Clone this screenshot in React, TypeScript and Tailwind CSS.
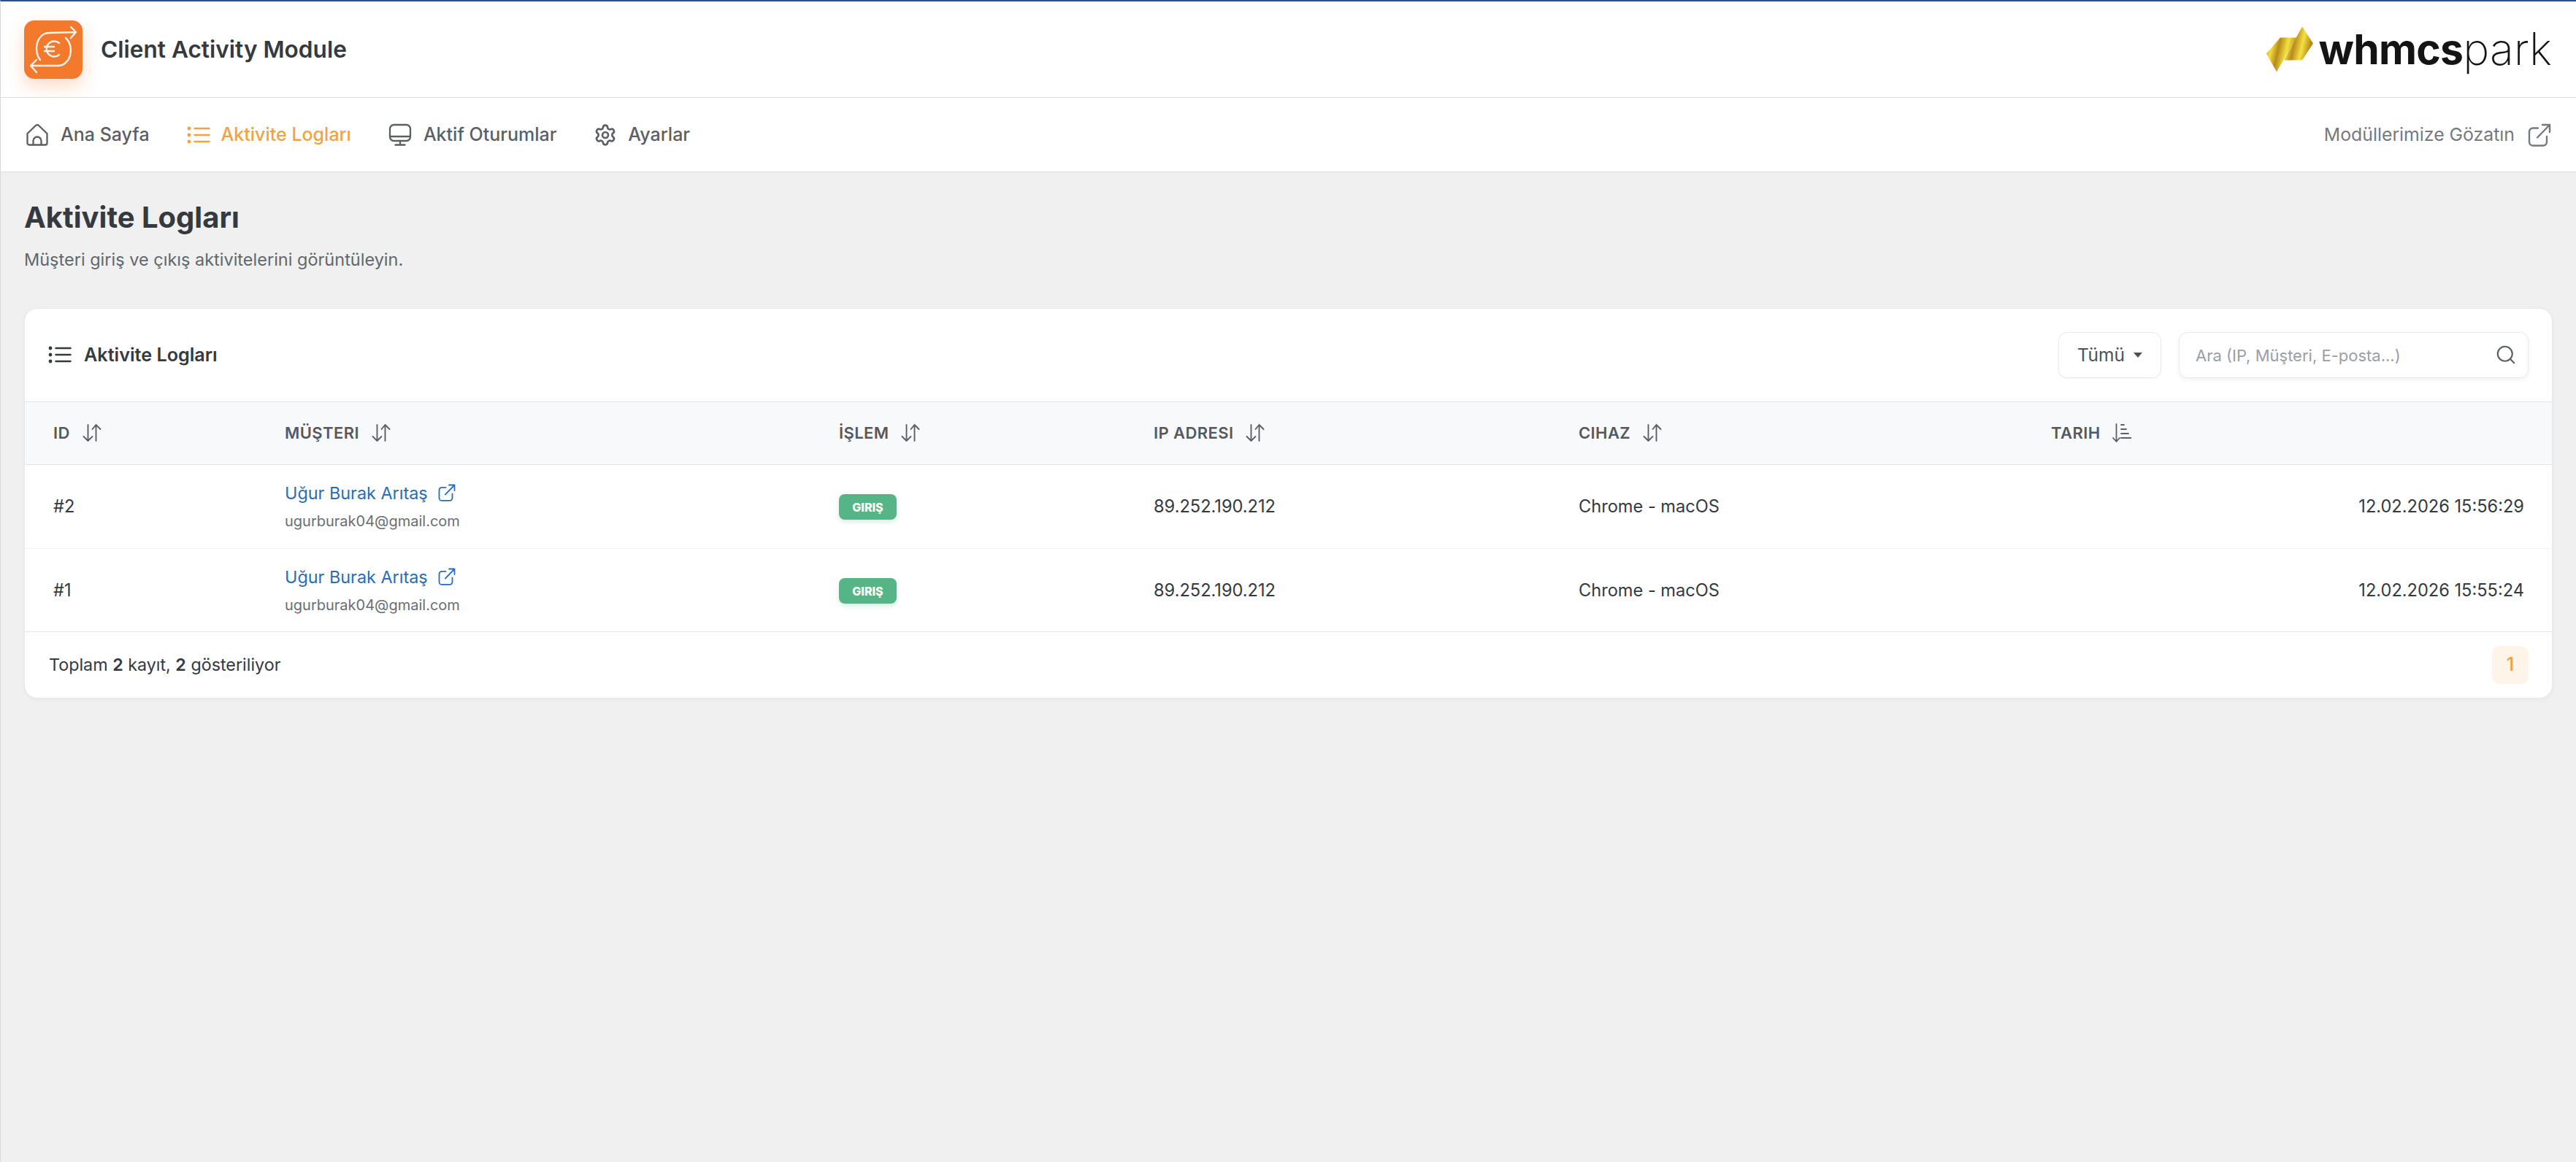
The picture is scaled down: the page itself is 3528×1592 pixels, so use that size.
import { Search, Settings } from "lucide-react";

type LogRow = {
  id: string;
  name: string;
  email: string;
  ip: string;
  device: string;
  date: string;
};

const rows: LogRow[] = [
  {
    id: "#2",
    name: "Uğur Burak Arıtaş",
    email: "ugurburak04@gmail.com",
    ip: "89.252.190.212",
    device: "Chrome - macOS",
    date: "12.02.2026 15:56:29",
  },
  {
    id: "#1",
    name: "Uğur Burak Arıtaş",
    email: "ugurburak04@gmail.com",
    ip: "89.252.190.212",
    device: "Chrome - macOS",
    date: "12.02.2026 15:55:24",
  },
];

function ModuleLogo() {
  return (
    <div className="h-[80px] w-[80px] shrink-0 rounded-[14px] bg-[#f3792d] shadow-[0_10px_24px_rgba(243,121,45,0.28)]">
      <svg viewBox="0 0 80 80" className="h-full w-full" fill="none" stroke="#fdf3ea" strokeWidth="2.4" strokeLinecap="round" strokeLinejoin="round">
        <path d="M22 54C12 42 17 17 35 17L71 16M64 9l7 7-7 8" />
        <path d="M57 24C70 36 64 62 46 62L9 62M17 54l-8 8 8 9" />
        <path d="M48 31a10.5 10.5 0 1 0 0 16" />
        <path d="M28 36h13M28 42h13" />
      </svg>
    </div>
  );
}

function BrandLogo() {
  return (
    <div className="flex items-center">
      <svg viewBox="0 0 66 62" className="h-[63px] w-[66px]">
        <defs>
          <linearGradient id="gold" x1="0" y1="0" x2="1" y2="0.25">
            <stop offset="0" stopColor="#b98a1c" />
            <stop offset="0.22" stopColor="#f4e03f" />
            <stop offset="0.45" stopColor="#b88a1b" />
            <stop offset="0.72" stopColor="#f4e23f" />
            <stop offset="1" stopColor="#b5851a" />
          </linearGradient>
        </defs>
        <path d="M1 37 20 15H42L15 62Z" fill="url(#gold)" />
        <path d="M50 0 65 23 50 46H25Z" fill="url(#gold)" />
      </svg>
      <span className="ml-[6px] text-[57px] leading-none font-bold tracking-[-0.7px] text-[#141414]">
        whmcs
      </span>
      <span className="text-[61px] leading-none font-extralight text-[#141414]">park</span>
    </div>
  );
}

function HomeIcon() {
  return (
    <svg viewBox="0 0 32 32" className="h-[32px] w-[32px]" fill="none" stroke="currentColor" strokeWidth="2.3" strokeLinecap="round" strokeLinejoin="round">
      <path d="M2.5 14 13.6 3.2a3.4 3.4 0 0 1 4.8 0L29.5 14V27a2.5 2.5 0 0 1-2.5 2.5H5A2.5 2.5 0 0 1 2.5 27Z" />
      <path d="M10.5 29v-5a5.5 5.5 0 0 1 11 0v5" />
    </svg>
  );
}

function ListIcon() {
  return (
    <svg viewBox="0 0 32 24" className="h-[24px] w-[32px]" fill="none" stroke="currentColor" strokeWidth="2.5" strokeLinecap="round">
      <path d="M10.5 3h20M10.5 12h20M10.5 21h20" />
      <circle cx="3" cy="3" r="2.4" fill="currentColor" stroke="none" />
      <circle cx="3" cy="12" r="2.4" fill="currentColor" stroke="none" />
      <circle cx="3" cy="21" r="2.4" fill="currentColor" stroke="none" />
    </svg>
  );
}

function MonitorIcon() {
  return (
    <svg viewBox="0 0 32 32" className="h-[32px] w-[32px]" fill="none" stroke="currentColor" strokeWidth="2.3" strokeLinecap="round" strokeLinejoin="round">
      <rect x="2" y="2" width="28" height="22" rx="5.5" />
      <path d="M2 18h28M16 24v5M9.5 29.5h13" />
    </svg>
  );
}

function ExternalIcon({ className }: { className: string }) {
  return (
    <svg viewBox="0 0 32 32" className={className} fill="none" stroke="currentColor" strokeWidth="2.4" strokeLinecap="round" strokeLinejoin="round">
      <path d="M14 6.5H7a5 5 0 0 0-5 5V25.5a5 5 0 0 0 5 5H21a5 5 0 0 0 5-5V18" />
      <path d="M13 19.5 30 2M20 2h10v10" />
    </svg>
  );
}

function SortIcon() {
  return (
    <svg viewBox="0 0 26 26" className="h-[26px] w-[26px] text-[#5c6066]" fill="none" stroke="currentColor" strokeWidth="1.9" strokeLinecap="round" strokeLinejoin="round">
      <path d="M7.5 2v22M1.5 18l6 6 6-6" />
      <path d="M18.5 24V2M13.5 8l5-6 6 6" />
    </svg>
  );
}

function SortDescIcon() {
  return (
    <svg viewBox="0 0 26 26" className="h-[26px] w-[26px] text-[#5c6066]" fill="none" stroke="currentColor" strokeWidth="1.8" strokeLinecap="round" strokeLinejoin="round">
      <path d="M5.5 1v24M1 20l4.5 5 4.5-5" />
      <path d="M12 2h4M12 8h7M12 14h10M12 20h14" />
    </svg>
  );
}

function HeadCell({ label, width, icon }: { label: string; width: string; icon?: "desc" }) {
  return (
    <th className={`${width} pl-[39px] text-left font-semibold`}>
      <div className="flex items-center gap-[17px]">
        <span className="text-[22px] tracking-[0.4px] text-[#55595f]">{label}</span>
        {icon === "desc" ? <SortDescIcon /> : <SortIcon />}
      </div>
    </th>
  );
}

export default function App() {
  return (
    <div className="flex min-h-screen flex-col border-t-[2px] border-l border-[#2c5282] border-l-[#d9d9d9] bg-[#f0f0f0] text-[#343a40] [font-family:Inter,sans-serif]">
      <header className="flex h-[132px] items-center justify-between border-b border-[#dedede] bg-white pr-[33px] pl-[32px]">
        <div className="flex items-center gap-[25px]">
          <ModuleLogo />
          <span className="text-[31.6px] font-semibold text-[#343a40]">Client Activity Module</span>
        </div>
        <BrandLogo />
      </header>

      <nav className="flex h-[102px] items-center justify-between border-b border-[#dedede] bg-white pr-[34px] pl-[34px] text-[25px] font-medium text-[#5b5f64]">
        <div className="flex items-center gap-[51px]">
          <a className="flex items-center gap-[16px]">
            <HomeIcon />
            Ana Sayfa
          </a>
          <a className="flex items-center gap-[15px] text-[#f0a342]">
            <ListIcon />
            Aktivite Logları
          </a>
          <a className="flex items-center gap-[16px]">
            <MonitorIcon />
            Aktif Oturumlar
          </a>
          <a className="flex items-center gap-[15px]">
            <Settings size={32} strokeWidth={2} />
            Ayarlar
          </a>
        </div>
        <a className="flex items-center gap-[18px] text-[24.8px] font-normal text-[#757a80]">
          Modüllerimize Gözatın
          <ExternalIcon className="h-[32px] w-[32px]" />
        </a>
      </nav>

      <main className="px-[32px]">
        <h1 className="mt-[36px] text-[40px] leading-[52px] font-bold text-[#343a40]">Aktivite Logları</h1>
        <p className="mt-[16px] text-[23.5px] leading-[32px] text-[#62676c]">
          Müşteri giriş ve çıkış aktivitelerini görüntüleyin.
        </p>

        <section className="mt-[50px] overflow-hidden rounded-[18px] border border-[#e6e8ea] bg-white shadow-[0_2px_6px_rgba(0,0,0,0.04)]">
          <div className="flex h-[128px] items-center justify-between border-b border-[#e2e5e8] pr-[32px] pl-[32px]">
            <div className="flex items-center gap-[17px]">
              <span className="text-[#343a40]">
                <ListIcon />
              </span>
              <span className="text-[25.2px] font-semibold text-[#343a40]">Aktivite Logları</span>
            </div>
            <div className="flex items-center gap-[24px]">
              <button className="flex h-[63px] w-[141px] items-center justify-center gap-[12px] rounded-[12px] border border-[#e8e9eb] bg-white text-[24.5px] text-[#4d5258] shadow-[0_1px_3px_rgba(0,0,0,0.04)]">
                Tümü
                <span className="h-0 w-0 border-x-[6px] border-t-[7px] border-x-transparent border-t-[#4d5258]" />
              </button>
              <div className="relative h-[63px] w-[479px]">
                <input
                  placeholder="Ara (IP, Müşteri, E-posta...)"
                  className="h-full w-full rounded-[12px] border border-[#e8e9eb] bg-white pr-[60px] pl-[22px] text-[22px] shadow-[0_2px_6px_rgba(0,0,0,0.06)] outline-none placeholder:text-[#9a9ea6]"
                />
                <Search size={30} strokeWidth={1.7} className="absolute top-[16px] right-[16px] text-[#5b5f64]" />
              </div>
            </div>
          </div>

          <table className="w-full table-fixed border-collapse">
            <thead>
              <tr className="h-[85px] border-b border-[#e2e5e8] bg-[#f8f9fb]">
                <HeadCell label="ID" width="w-[317px]" />
                <HeadCell label="MÜŞTERI" width="w-[759px]" />
                <HeadCell label="İŞLEM" width="w-[431px]" />
                <HeadCell label="IP ADRESI" width="w-[582px]" />
                <HeadCell label="CIHAZ" width="w-[647px]" />
                <HeadCell label="TARIH" width="w-auto" icon="desc" />
              </tr>
            </thead>
            <tbody>
              {rows.map((row, i) => (
                <tr key={row.id} className={`text-[23.6px] text-[#343a40] ${i === 0 ? "h-[115px] border-b border-[#f1f2f4]" : "h-[114px]"}`}>
                  <td className="pl-[39px]">{row.id}</td>
                  <td className="pl-[39px]">
                    <div className="flex items-center gap-[14px] text-[23.4px] text-[#2a6db5]">
                      {row.name}
                      <ExternalIcon className="h-[24px] w-[24px]" />
                    </div>
                    <div className="mt-[6px] text-[20px] text-[#696e73]">{row.email}</div>
                  </td>
                  <td className="pl-[39px]">
                    <span className="inline-flex h-[35px] w-[79px] items-center justify-center rounded-[8px] bg-[#55b586] text-[16px] font-extrabold text-white shadow-[0_3px_6px_rgba(85,181,134,0.25)]">
                      GIRIŞ
                    </span>
                  </td>
                  <td className="pl-[39px]">{row.ip}</td>
                  <td className="pl-[39px]">{row.device}</td>
                  <td className="pr-[38px] text-right">{row.date}</td>
                </tr>
              ))}
            </tbody>
          </table>

          <div className="flex h-[91px] items-center justify-between border-t border-[#e2e5e8] pr-[32px] pl-[33px]">
            <span className="text-[23.3px] text-[#343a40]">
              Toplam <b className="font-semibold">2</b> kayıt, <b className="font-semibold">2</b> gösteriliyor
            </span>
            <span className="flex h-[52px] w-[50px] items-center justify-center rounded-[10px] bg-[#fff4ea] text-[25px] font-medium text-[#f3a03a]">
              1
            </span>
          </div>
        </section>
      </main>
    </div>
  );
}
